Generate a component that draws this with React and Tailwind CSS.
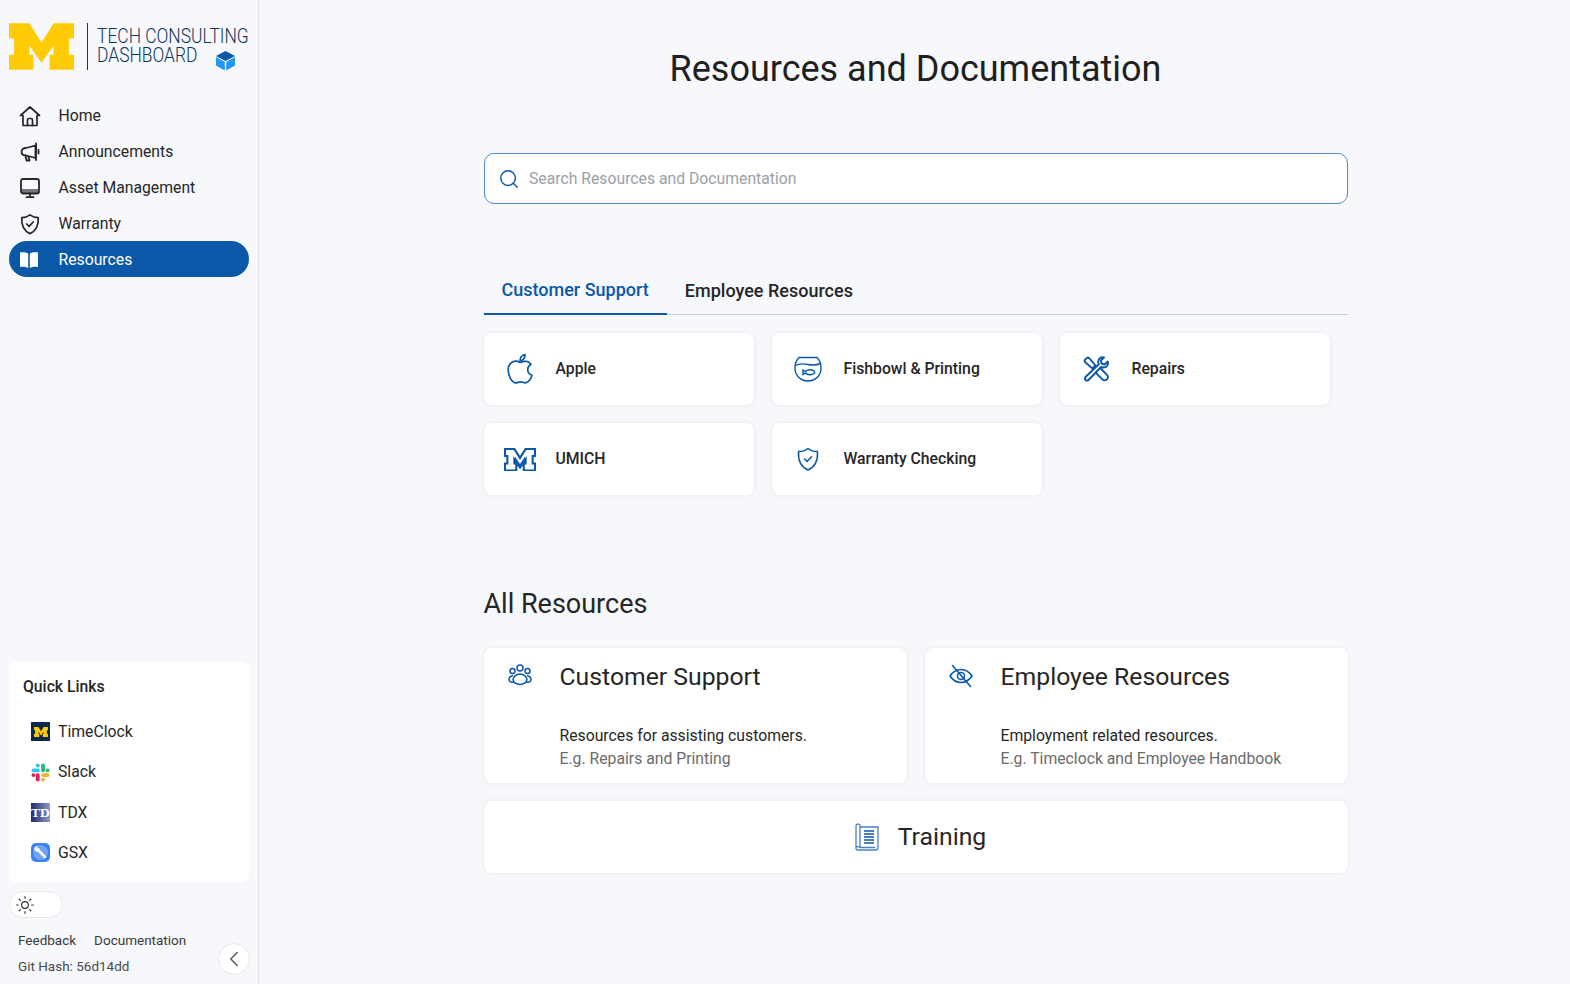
import React from "react";
import { ChevronLeft, Search, Sun } from "lucide-react";

const BLOCK_M = "M0 0H20L32 19L44 0H64V15H59V31H64V46H40V31H44V22L32 39L20 22V31H24V46H0V31H5V15H0Z";

const HomeIcon = () => (
  <svg width="22" height="22" viewBox="0 0 22 22" fill="none" stroke="#262626" strokeWidth="1.700" strokeLinejoin="round" strokeLinecap="round">
    <path d="M11 2L1.500 10.500H4V20.500H18V10.500H20.500Z" />
    <path d="M8.500 20.500V15C8.500 14 9 13.500 10 13.500H12C13 13.500 13.500 14 13.500 15V20.500" />
  </svg>
);

const MegaphoneIcon = () => (
  <svg width="22" height="22" viewBox="0 0 22 22" fill="none" stroke="#262626" strokeWidth="1.800" strokeLinejoin="round" strokeLinecap="round">
    <path d="M16.500 4.500L7 7C4 7 2.500 8.800 2.500 10.800C2.500 12.800 4 14.500 7 14.500L16.500 17Z" />
    <path d="M17 2.500V19M19.500 9V12.500" />
    <path d="M6.500 14.500L7.500 19.500H10.500L9.500 15.500" />
  </svg>
);

const MonitorIcon = () => (
  <svg width="22" height="22" viewBox="0 0 22 22" fill="none" stroke="#262626" strokeWidth="1.800" strokeLinecap="round">
    <rect x="2.500" y="12" width="17" height="4" fill="#777" stroke="none" />
    <rect x="2" y="2" width="18" height="14.500" rx="2" />
    <path d="M11 16.500V20M7.500 20.200H14.500" />
  </svg>
);

const BlackShieldIcon = () => (
  <svg width="22" height="22" viewBox="0 0 24 24" fill="none" stroke="#262626" strokeWidth="1.900" strokeLinecap="round" strokeLinejoin="round">
    <path d="M12 2C14.500 4 17.500 5 21 5C21.500 13 19.500 19 12 22.500C4.500 19 2.500 13 3 5C6.500 5 9.500 4 12 2Z" />
    <path d="M8.500 12L11 14.500L15.500 9.800" />
  </svg>
);

const BookIcon = () => (
  <svg width="20" height="20" viewBox="0 0 20 20" fill="#fff">
    <path d="M1 2.500C4 1.800 7 2.200 9.200 3.600V18C7 16.800 4 16.400 1 17Z" />
    <path d="M19 2.500C16 1.800 13 2.200 10.800 3.600V18C13 16.800 16 16.400 19 17Z" />
  </svg>
);

const nav_links = [
  { name: "Home", icon: HomeIcon },
  { name: "Announcements", icon: MegaphoneIcon },
  { name: "Asset Management", icon: MonitorIcon },
  { name: "Warranty", icon: BlackShieldIcon },
];

const CubeIcon = () => (
  <svg width="21" height="21" viewBox="0 0 21 21">
    <path d="M10.500 1L20 6L10.500 11L1 6Z" fill="#0b57a8" />
    <path d="M1 7L9.800 12V20.500L1 15.500Z" fill="#2196f3" />
    <path d="M20 7L11.200 12V20.500L20 15.500Z" fill="#2196f3" />
  </svg>
);

const AppleIcon = () => (
  <svg width="26" height="32" viewBox="0 0 26 32" fill="none" stroke="#0b57a8" strokeWidth="1.700" strokeLinejoin="round">
    <path d="M13 9.500C10.500 8 7.500 7.800 5 9.300C2.300 11 1 14 1.200 17.500C1.500 22.500 4.500 29.500 8.500 29.800C10.300 30 11.500 28.800 13.500 28.800C15.500 28.800 16.500 30 18.500 29.800C21.500 29.300 24 25.500 25 22.300C22.300 21.300 20.700 19 20.700 16.500C20.700 14.300 22 12.500 24 11.300C22.500 9 19.800 8 17.500 8.300C15.800 8.500 14.500 9.300 13 9.500Z" />
    <path d="M13 8C13 5 15 2.200 18 1.500C18.300 4.500 16.300 7.500 13 8Z" />
  </svg>
);

const FishbowlIcon = () => (
  <svg width="28" height="26" viewBox="0 0 28 26" fill="none" stroke="#0b57a8" strokeWidth="1.400">
    <path d="M5 1.500H23C25.500 3.800 27 7.500 27 12C27 19.500 21.500 25 14 25C6.500 25 1 19.500 1 12C1 7.500 2.500 3.800 5 1.500Z" />
    <path d="M1.300 9.500C5 7.500 9 7.500 14 8.500C19 9.500 23 9 26.700 7.500" />
    <path d="M9 14L11.500 15.500C13 13.500 18 13 20 15C20.800 16 20.800 17 20 17.500C18 19.500 13 19 11.500 17L9 18.500Z" />
  </svg>
);

const ToolsIcon = () => (
  <svg width="26" height="26" viewBox="0 0 26 26" fill="none" stroke="#0b57a8" strokeWidth="1.900" strokeLinejoin="round" strokeLinecap="round">
    <path d="M1.800 4L4 1.800C5 1.300 6 1.800 6.800 2.800L12.500 9.500L9.500 12.500L2.800 6.800C1.800 6 1.300 5 1.800 4Z" />
    <rect x="15.800" y="11.500" width="6.500" height="14" rx="3.200" transform="rotate(-45 19 18.500)" />
    <path d="M15.800 8.200L3 20.500C1.800 21.800 1.500 23 2.500 24C3.500 25 4.800 24.800 6 23.500L18 11C20.500 12 23 11.500 24.300 9.500C25 8.300 25.200 7 24.800 5.500L21.500 8.500L18.500 7.500L17.800 4.500L21 1.500C19 1 17.300 1.500 16.200 2.800C15 4.500 15 6.500 15.800 8.200Z" fill="#fff" />
  </svg>
);

const UmichIcon = () => (
  <svg width="32" height="23" viewBox="0 0 64 46">
    <path d={BLOCK_M} transform="translate(2 2) scale(0.938)" fill="#fff" stroke="#0b57a8" strokeWidth="4.500" />
    <path d="M22 17L32 32L42 17V29L32 42L22 29Z" fill="#0b57a8" />
  </svg>
);

const ShieldIcon = () => (
  <svg width="24" height="24" viewBox="0 0 24 24" fill="none" stroke="#0b57a8" strokeWidth="1.500" strokeLinecap="round" strokeLinejoin="round">
    <path d="M12 1.500C14.500 3.500 17.500 4.500 21.500 4.500C22 13 20 19.500 12 23C4 19.500 2 13 2.500 4.500C6.500 4.500 9.500 3.500 12 1.500Z" />
    <path d="M8.500 12L11 14.500L15.500 9.800" />
  </svg>
);

const PeopleIcon = () => (
  <svg width="24" height="22" viewBox="0 0 24 22" fill="none" stroke="#0b57a8" strokeWidth="1.500">
    <circle cx="12" cy="4" r="3" />
    <circle cx="4.500" cy="7" r="2.500" />
    <circle cx="19.500" cy="7" r="2.500" />
    <path d="M12 10C8 10 5 13 5 15.500C5 18 8 20.500 12 20.500C16 20.500 19 18 19 15.500C19 13 16 10 12 10Z" />
    <path d="M5 11.500C2.500 12 1 14 1 15.500C1 17.500 3 18.500 5.500 18.500M19 11.500C21.500 12 23 14 23 15.500C23 17.500 21 18.500 18.500 18.500" />
  </svg>
);

const EyeOffIcon = () => (
  <svg width="24" height="24" viewBox="0 0 24 24" fill="none" stroke="#0b57a8" strokeWidth="1.600" strokeLinecap="round">
    <path d="M1 12C4 7.500 8 5.500 12 5.500C16 5.500 20 7.500 23 12C20 16.500 16 18.500 12 18.500C8 18.500 4 16.500 1 12Z" />
    <circle cx="12" cy="12" r="3.500" />
    <path d="M3.500 1.500L21.500 22.500" />
  </svg>
);

const ScrollIcon = () => (
  <svg width="24" height="28" viewBox="0 0 24 28" fill="none" stroke="#4a82c4" strokeWidth="1.300">
    <path d="M5 24V3C5 1.500 4 1 3 1C2 1 1 1.500 1 3V25C1 26.500 2 27 3 27H20C21.500 27 23 26.500 23 25V4H5" />
    <path d="M1 24.500C2 23.500 4 23.500 5 24.500H20" />
    <path d="M9 8H19M9 11H19M9 14H19M9 17H19M9 20H19" stroke="#0b57a8" strokeWidth="1.400" />
  </svg>
);

const TimeClockIcon = () => (
  <div className="w-[19px] h-[19px] bg-[#0b2a4a] flex items-center justify-center">
    <svg width="14" height="10" viewBox="0 0 64 46" fill="#ffcb05">
      <path d={BLOCK_M} />
    </svg>
  </div>
);

const SlackIcon = () => (
  <svg width="19" height="19" viewBox="0 0 19 19">
    <rect x="0.500" y="5.500" width="8.300" height="3.800" rx="1.900" fill="#36c5f0" />
    <rect x="4.800" y="0.500" width="4" height="4" rx="1.900" fill="#36c5f0" />
    <rect x="10.200" y="0.500" width="3.800" height="8.800" rx="1.900" fill="#2eb67d" />
    <rect x="14.700" y="5.500" width="3.800" height="3.800" rx="1.900" fill="#2eb67d" />
    <rect x="10.200" y="10.200" width="8.300" height="3.800" rx="1.900" fill="#ecb22e" />
    <rect x="10.200" y="14.700" width="3.800" height="3.800" rx="1.900" fill="#ecb22e" />
    <rect x="4.800" y="10.200" width="3.800" height="8.300" rx="1.900" fill="#e01e5a" />
    <rect x="0.500" y="10.200" width="3.800" height="3.800" rx="1.900" fill="#e01e5a" />
  </svg>
);

const TdxIcon = () => (
  <div className="w-[19px] h-[19px] bg-gradient-to-r from-[#23276f] to-[#8f9cc4] flex items-center justify-center overflow-hidden text-white text-[13.500px] font-bold leading-none font-['Liberation_Serif',serif]">
    TD
  </div>
);

const GsxIcon = () => (
  <div className="w-[19px] h-[19px] rounded-[5px] bg-[#3b82f6] flex items-center justify-center">
    <svg width="17" height="17" viewBox="0 0 17 17">
      <circle cx="8.500" cy="8.500" r="7.500" fill="#6ea3f5" />
      <path d="M5 5L13 13" stroke="#fff" strokeWidth="2.600" strokeLinecap="round" />
      <path d="M2.500 6C1.500 3.500 3.500 1.500 6 2.500L4.500 4.300L5.700 5.500L7.500 4C8.300 6.500 6 8.500 3.800 7.500Z" fill="#fff" />
    </svg>
  </div>
);

const quick_links = [
  { name: "TimeClock", icon: TimeClockIcon },
  { name: "Slack", icon: SlackIcon },
  { name: "TDX", icon: TdxIcon },
  { name: "GSX", icon: GsxIcon },
];

const support_cards = [
  { name: "Apple", icon: AppleIcon },
  { name: "Fishbowl & Printing", icon: FishbowlIcon },
  { name: "Repairs", icon: ToolsIcon },
  { name: "UMICH", icon: UmichIcon },
  { name: "Warranty Checking", icon: ShieldIcon },
];

const all_resources = [
  { title: "Customer Support", line: "Resources for assisting customers.", sub: "E.g. Repairs and Printing", icon: PeopleIcon },
  { title: "Employee Resources", line: "Employment related resources.", sub: "E.g. Timeclock and Employee Handbook", icon: EyeOffIcon },
];

const Sidebar = () => (
  <aside className="w-[259px] shrink-0 h-full border-r border-[#e3e5e9] flex flex-col justify-between pl-[9px] pr-[9px] relative">
    <div>
      {/* Logo */}
      <div className="flex items-start pt-[23px] h-[82px]">
        <svg width="65" height="47" viewBox="0 0 64 46" fill="#ffcb05" className="shrink-0">
          <path d={BLOCK_M} />
        </svg>
        <div className="w-px h-[47px] shrink-0 bg-[#12355b] ml-[13px]"></div>
        <div className="ml-[9px] text-[#12355b] font-light text-[21px] leading-[19px] pt-[4px] whitespace-nowrap origin-left scale-x-[0.83]">
          <div>TECH CONSULTING</div>
          <div>DASHBOARD</div>
        </div>
        <div className="absolute left-[215px] top-[50px]">
          <CubeIcon />
        </div>
      </div>

      {/* Navigation */}
      <nav className="mt-[15px]">
        {nav_links.map((res, index) => {
          const Icon = res.icon;
          return (
            <div key={index} className="h-[36px] pt-[2px] flex items-center pl-[9.500px] text-[#262626]">
              <Icon />
              <span className="ml-[18px] text-[15.750px]">{res.name}</span>
            </div>
          );
        })}
        <div className="h-[36px] pt-[2px] flex items-center pl-[10px] bg-[#0b57a8] rounded-full text-white">
          <BookIcon />
          <span className="ml-[19.500px] text-[15.750px]">Resources</span>
        </div>
      </nav>
    </div>

    <div>
      {/* Quick Links */}
      <div className="bg-white rounded-[8px] h-[220px] pt-[14px]">
        <h2 className="pl-[14px] text-[15.750px] font-medium leading-[22px] text-[#262626]">Quick Links</h2>
        <div className="mt-[13.500px]">
          {quick_links.map((res, index) => {
            const Icon = res.icon;
            return (
              <div key={index} className="h-[40.400px] flex items-center pl-[22px] text-[#262626]">
                <Icon />
                <span className="ml-[8px] text-[15.750px]">{res.name}</span>
              </div>
            );
          })}
        </div>
      </div>

      {/* Theme toggle */}
      <div className="mt-[9px] w-[54px] h-[27px] rounded-full bg-white border border-[#e6e7ea] flex items-center pl-[5px] text-[#333]">
        <Sun size={20} strokeWidth={1.400} />
      </div>

      {/* Footer */}
      <div className="mt-[10px] pl-[9px] text-[13.500px] text-[#3a3a3a] h-[56px]">
        <div className="flex gap-[18px] leading-[20px] pt-[2px]">
          <span>Feedback</span>
          <span>Documentation</span>
        </div>
        <div className="leading-[20px] mt-[6px] text-[#4a4a4a]">Git Hash: 56d14dd</div>
      </div>
    </div>

    <button className="absolute left-[218px] top-[943px] w-[32px] h-[32px] rounded-full bg-white border border-[#e6e7ea] flex items-center justify-center text-[#555]">
      <ChevronLeft size={26} strokeWidth={1.300} />
    </button>
  </aside>
);

const App = () => {
  return (
    <div className="h-[984px] overflow-hidden flex bg-[#f6f8fc] font-['Roboto',sans-serif]">
      <Sidebar />

      <main className="flex-1 min-w-0 flex justify-center pl-[2px]">
        <div className="w-[864px]">
          <h1 className="pt-[49px] text-[36px] leading-[40px] text-center text-[#1f1f1f]">Resources and Documentation</h1>

          {/* Search */}
          <div className="mt-[64px] h-[51px] bg-white border border-[#4f8ad0] rounded-[10px] flex items-center pl-[13.500px] text-[#0b57a8]">
            <Search size={22} strokeWidth={1.600} />
            <span className="ml-[9px] text-[15.750px] text-[#9aa0a8]">Search Resources and Documentation</span>
          </div>

          {/* Tabs */}
          <div className="mt-[63px] h-[48px] flex border-b border-[#c9ccd1]">
            <div className="h-[48px] px-[18px] flex items-center border-b-2 border-[#0b57a8] text-[#0b57a8] text-[18px] font-medium pb-[2px]">Customer Support</div>
            <div className="h-[48px] px-[18px] pb-[2px] flex items-center text-[#262626] text-[18px] font-medium">Employee Resources</div>
          </div>

          {/* Support cards */}
          <div className="mt-[18px] grid grid-cols-[270px_270px_270px] gap-[18px]">
            {support_cards.map((res, index) => {
              const Icon = res.icon;
              return (
                <div key={index} className="h-[72px] bg-white rounded-[8px] shadow-[0_0_4px_rgba(0,0,0,0.08)] flex items-center">
                  <div className="w-[72px] flex items-center justify-center">
                    <Icon />
                  </div>
                  <span className="text-[15.750px] font-medium text-[#262626]">{res.name}</span>
                </div>
              );
            })}
          </div>

          {/* All Resources */}
          <h2 className="mt-[91px] text-[27px] leading-[36px] text-[#262626]">All Resources</h2>
          <div className="mt-[26px] grid grid-cols-2 gap-[18px]">
            {all_resources.map((res, index) => {
              const Icon = res.icon;
              return (
                <div key={index} className="h-[135px] bg-white rounded-[8px] shadow-[0_0_4px_rgba(0,0,0,0.08)] flex">
                  <div className="w-[76px] pr-[4px] pt-[16px] flex justify-center shrink-0">
                    <Icon />
                  </div>
                  <div className="pt-[13px]">
                    <h3 className="text-[24.750px] leading-[32px] text-[#262626]">{res.title}</h3>
                    <p className="mt-[31px] text-[15.750px] leading-[23px] text-[#262626]">{res.line}</p>
                    <p className="text-[15.750px] leading-[23px] text-[#6b6b6b]">{res.sub}</p>
                  </div>
                </div>
              );
            })}
            <div className="col-span-2 h-[72px] bg-white rounded-[8px] shadow-[0_0_4px_rgba(0,0,0,0.08)] flex items-center justify-center gap-[19px] pl-[10px]">
              <ScrollIcon />
              <span className="text-[24.750px] text-[#262626]">Training</span>
            </div>
          </div>
        </div>
      </main>
    </div>
  );
};

export default App;
